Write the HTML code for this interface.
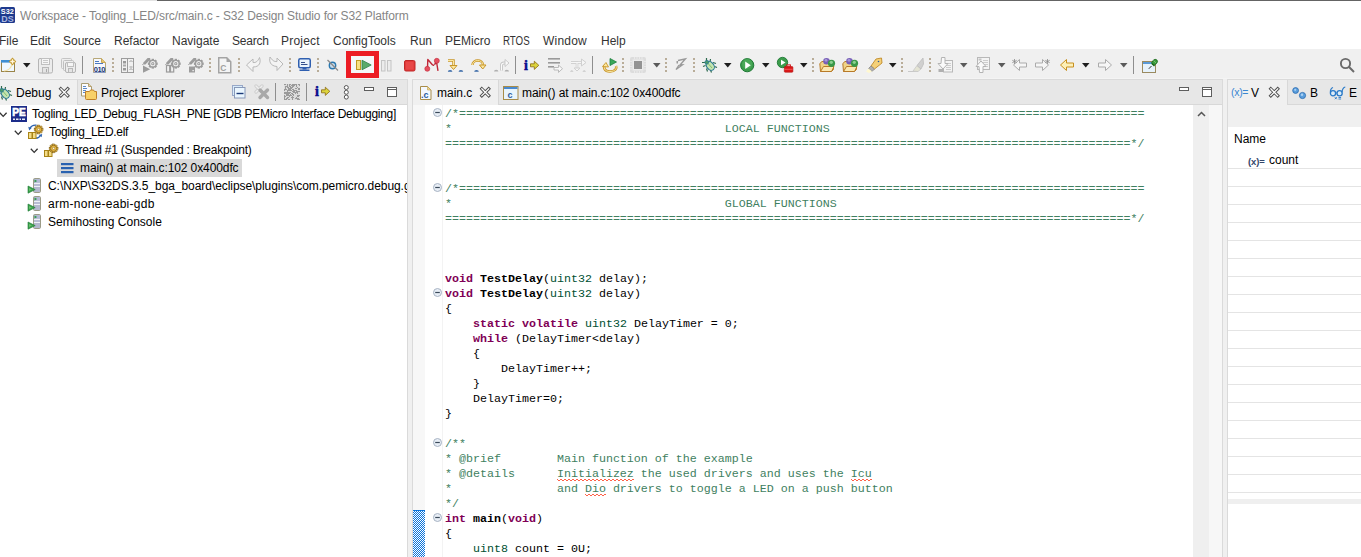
<!DOCTYPE html>
<html><head><meta charset="utf-8">
<style>
*{margin:0;padding:0;box-sizing:border-box}
html,body{width:1361px;height:557px;overflow:hidden;background:#f0f0f0;font-family:"Liberation Sans",sans-serif;font-size:12px;color:#000}
.a{position:absolute}
.t{position:absolute;white-space:pre;line-height:14px}
svg.i{position:absolute;overflow:visible}
#code{position:absolute;left:445px;top:107px;font-family:"Liberation Mono",monospace;font-size:11.67px;line-height:15px;white-space:pre;color:#000}
.c{color:#3f7f5f}
.k{color:#7f0055;font-weight:bold}
.ty{color:#005032}
.fn{font-weight:bold}
.tree{position:absolute;white-space:pre;line-height:18px;height:18px}
</style></head><body>

<div class="a" style="left:0;top:0;width:157px;height:1px;background:#e3e3e3"></div>
<div class="a" style="left:157px;top:0;width:1204px;height:1px;background:#646464"></div>
<div class="a" style="left:0;top:1px;width:1361px;height:48px;background:#fff"></div>
<div class="t" style="left:20px;top:9px;color:#858585;letter-spacing:-0.11px">Workspace - Togling_LED/src/main.c - S32 Design Studio for S32 Platform</div>
<div class="t" style="left:-1px;top:34px;color:#333;letter-spacing:0px">File</div>
<div class="t" style="left:30px;top:34px;color:#333;letter-spacing:0px">Edit</div>
<div class="t" style="left:63px;top:34px;color:#333;letter-spacing:0px">Source</div>
<div class="t" style="left:114px;top:34px;color:#333;letter-spacing:0px">Refactor</div>
<div class="t" style="left:172px;top:34px;color:#333;letter-spacing:0px">Navigate</div>
<div class="t" style="left:232px;top:34px;color:#333;letter-spacing:-0.2px">Search</div>
<div class="t" style="left:281px;top:34px;color:#333;letter-spacing:0.2px">Project</div>
<div class="t" style="left:333px;top:34px;color:#333;letter-spacing:0px">ConfigTools</div>
<div class="t" style="left:410px;top:34px;color:#333;letter-spacing:0px">Run</div>
<div class="t" style="left:445px;top:34px;color:#333;letter-spacing:0px">PEMicro</div>
<div class="t" style="left:503px;top:34px;color:#333;transform:scaleX(0.81);transform-origin:0 0">RTOS</div>
<div class="t" style="left:543px;top:34px;color:#333;letter-spacing:0.2px">Window</div>
<div class="t" style="left:601px;top:34px;color:#333;letter-spacing:0px">Help</div>
<svg class="i" style="left:0px;top:7px" width="15" height="16" viewBox="0 0 15 16"><rect x="0" y="0" width="15" height="16" rx="1.5" fill="#1e3a8e"/><text x="0.8" y="6.8" font-family="Liberation Sans" font-weight="bold" font-size="7.6" fill="#fff" textLength="13" lengthAdjust="spacingAndGlyphs">S32</text><text x="1.3" y="14.6" font-family="Liberation Sans" font-weight="bold" font-size="9" fill="#aab8e0" textLength="12.4" lengthAdjust="spacingAndGlyphs">DS</text></svg>
<div class="a" style="left:0;top:78px;width:1361px;height:1px;background:#f4f4f4"></div>
<svg class="i" style="left:0px;top:57px" width="16" height="16" viewBox="0 0 16 16"><rect x="1.5" y="3.5" width="13" height="11" fill="#f0f8fe" stroke="#9a8448"/><rect x="1" y="3" width="9" height="2.6" fill="#3f8fd2"/><path d="M4 14 Q11 13 12 7" stroke="#f4e2a8" stroke-width="1.2" fill="none"/><polygon points="12.5,0.6 16.2,4.5 12.5,8.4 8.8,4.5" fill="#c49a30"/><path d="M12.5 2.3v4.4M10.3 4.5h4.4" stroke="#fff6dc" stroke-width="1.3"/></svg>
<svg class="i" style="left:23px;top:62.5px" width="8" height="5" viewBox="0 0 8 5"><polygon points="0,0 7.5,0 3.75,4.5" fill="#1e1e1e"/></svg>
<svg class="i" style="left:38px;top:58px" width="15" height="16" viewBox="0 0 15 16"><rect x="0.5" y="0.5" width="14" height="14.5" rx="1.5" fill="#ececec" stroke="#b5b5b5"/><rect x="3.5" y="0.5" width="8" height="6" fill="#f6f6f6" stroke="#c0c0c0"/><path d="M5 2.5h5M5 4.5h5" stroke="#c8c8c8"/><rect x="4.5" y="9.5" width="6" height="5.5" fill="#e4e4e4" stroke="#b8b8b8"/><rect x="8" y="11" width="1" height="3" fill="#aaa"/></svg>
<svg class="i" style="left:61px;top:58px" width="16" height="16" viewBox="0 0 16 16"><rect x="0.5" y="0.5" width="10" height="10" rx="1" fill="#eee" stroke="#c4c4c4"/><rect x="2.5" y="2.5" width="10" height="10" rx="1" fill="#eee" stroke="#c0c0c0"/><rect x="4.5" y="4.5" width="10" height="10" rx="1.5" fill="#ececec" stroke="#b5b5b5"/><rect x="6.5" y="4.5" width="6" height="4" fill="#f6f6f6" stroke="#c0c0c0"/><rect x="7.5" y="10.5" width="4" height="4" fill="#e4e4e4" stroke="#b8b8b8"/></svg>
<div class="a" style="left:82px;top:56px;width:1px;height:18px;background:#8e8e8e"></div>
<svg class="i" style="left:93px;top:58px" width="14" height="16" viewBox="0 0 14 16"><path d="M0.5 0.5h8l4 4v10h-12z" fill="#f6f8fd" stroke="#b8a878"/><path d="M8.5 0.5v4h4" fill="#e8c870" stroke="#c8a858"/><path d="M2 3.5h4M2 5.5h8" stroke="#4a78c0" stroke-width="1"/><text x="0.8" y="13.6" font-family="Liberation Sans" font-weight="bold" font-size="7.5" fill="#1a3a78" letter-spacing="-0.4">010</text><path d="M0.5 14.5h12" stroke="#8a9ac0"/></svg>
<svg class="i" style="left:112px;top:58px" width="2" height="14" viewBox="0 0 2 14"><rect x="0" y="0" width="2" height="2" fill="#b9ad99"/><rect x="0" y="4" width="2" height="2" fill="#b9ad99"/><rect x="0" y="8" width="2" height="2" fill="#b9ad99"/><rect x="0" y="12" width="2" height="2" fill="#b9ad99"/></svg>
<svg class="i" style="left:121px;top:58px" width="14" height="16" viewBox="0 0 14 16"><rect x="0.5" y="0.5" width="12" height="14" fill="none" stroke="#9c9c9c"/><path d="M6.5 0.5v14" stroke="#9c9c9c"/><rect x="2" y="3" width="3" height="2.5" fill="#999"/><rect x="2" y="6.5" width="3" height="2" fill="#aaa"/><rect x="2" y="10" width="3" height="2.5" fill="#999"/><path d="M8.5 4l1.5-1.5 1.5 1.5M8.5 9h3M8.5 12l1.5-1.5 1.5 1.5" stroke="#9c9c9c" fill="none"/></svg>
<svg class="i" style="left:142px;top:57px" width="16" height="16" viewBox="0 0 16 16"><polygon points="1.2,5.8 5.6,1 8.2,1 8.2,2.4 3.4,7.6 1.2,7.6" fill="#9c9c9c"/><rect x="0" y="7" width="1" height="1" fill="#b8b8b8"/><polygon points="1,8.6 8.2,12.2 1,15.8" fill="#9c9c9c"/><rect x="9.600000000000001" y="1.7999999999999998" width="2.4" height="2.2" fill="#9c9c9c" transform="rotate(0 10.8 6.7)"/><rect x="9.600000000000001" y="1.7999999999999998" width="2.4" height="2.2" fill="#9c9c9c" transform="rotate(45 10.8 6.7)"/><rect x="9.600000000000001" y="1.7999999999999998" width="2.4" height="2.2" fill="#9c9c9c" transform="rotate(90 10.8 6.7)"/><rect x="9.600000000000001" y="1.7999999999999998" width="2.4" height="2.2" fill="#9c9c9c" transform="rotate(135 10.8 6.7)"/><rect x="9.600000000000001" y="1.7999999999999998" width="2.4" height="2.2" fill="#9c9c9c" transform="rotate(180 10.8 6.7)"/><rect x="9.600000000000001" y="1.7999999999999998" width="2.4" height="2.2" fill="#9c9c9c" transform="rotate(225 10.8 6.7)"/><rect x="9.600000000000001" y="1.7999999999999998" width="2.4" height="2.2" fill="#9c9c9c" transform="rotate(270 10.8 6.7)"/><rect x="9.600000000000001" y="1.7999999999999998" width="2.4" height="2.2" fill="#9c9c9c" transform="rotate(315 10.8 6.7)"/><circle cx="10.8" cy="6.7" r="3.3" fill="#f0f0f0" stroke="#9c9c9c" stroke-width="1.4"/><circle cx="10.8" cy="6.7" r="1.6" fill="#9c9c9c"/><circle cx="10.8" cy="6.7" r="0.6" fill="#f0f0f0"/></svg>
<svg class="i" style="left:165px;top:57px" width="16" height="16" viewBox="0 0 16 16"><polygon points="1.2,5.8 5.6,1 8.2,1 8.2,2.4 3.4,7.6 1.2,7.6" fill="#9c9c9c"/><rect x="0" y="7" width="1" height="1" fill="#b8b8b8"/><rect x="1.5" y="8.5" width="3.2" height="6.5" fill="none" stroke="#9c9c9c" stroke-width="1.2"/><rect x="5.5" y="8.5" width="3.2" height="6.5" fill="none" stroke="#9c9c9c" stroke-width="1.2"/><rect x="9.600000000000001" y="1.7999999999999998" width="2.4" height="2.2" fill="#9c9c9c" transform="rotate(0 10.8 6.7)"/><rect x="9.600000000000001" y="1.7999999999999998" width="2.4" height="2.2" fill="#9c9c9c" transform="rotate(45 10.8 6.7)"/><rect x="9.600000000000001" y="1.7999999999999998" width="2.4" height="2.2" fill="#9c9c9c" transform="rotate(90 10.8 6.7)"/><rect x="9.600000000000001" y="1.7999999999999998" width="2.4" height="2.2" fill="#9c9c9c" transform="rotate(135 10.8 6.7)"/><rect x="9.600000000000001" y="1.7999999999999998" width="2.4" height="2.2" fill="#9c9c9c" transform="rotate(180 10.8 6.7)"/><rect x="9.600000000000001" y="1.7999999999999998" width="2.4" height="2.2" fill="#9c9c9c" transform="rotate(225 10.8 6.7)"/><rect x="9.600000000000001" y="1.7999999999999998" width="2.4" height="2.2" fill="#9c9c9c" transform="rotate(270 10.8 6.7)"/><rect x="9.600000000000001" y="1.7999999999999998" width="2.4" height="2.2" fill="#9c9c9c" transform="rotate(315 10.8 6.7)"/><circle cx="10.8" cy="6.7" r="3.3" fill="#f0f0f0" stroke="#9c9c9c" stroke-width="1.4"/><circle cx="10.8" cy="6.7" r="1.6" fill="#9c9c9c"/><circle cx="10.8" cy="6.7" r="0.6" fill="#f0f0f0"/></svg>
<svg class="i" style="left:188px;top:57px" width="16" height="16" viewBox="0 0 16 16"><polygon points="1.2,5.8 5.6,1 8.2,1 8.2,2.4 3.4,7.6 1.2,7.6" fill="#9c9c9c"/><rect x="0" y="7" width="1" height="1" fill="#b8b8b8"/><rect x="1" y="9.5" width="6" height="6" fill="#9c9c9c"/><rect x="4.5" y="13" width="1.2" height="1.2" fill="#fff"/><rect x="9.600000000000001" y="1.7999999999999998" width="2.4" height="2.2" fill="#9c9c9c" transform="rotate(0 10.8 6.7)"/><rect x="9.600000000000001" y="1.7999999999999998" width="2.4" height="2.2" fill="#9c9c9c" transform="rotate(45 10.8 6.7)"/><rect x="9.600000000000001" y="1.7999999999999998" width="2.4" height="2.2" fill="#9c9c9c" transform="rotate(90 10.8 6.7)"/><rect x="9.600000000000001" y="1.7999999999999998" width="2.4" height="2.2" fill="#9c9c9c" transform="rotate(135 10.8 6.7)"/><rect x="9.600000000000001" y="1.7999999999999998" width="2.4" height="2.2" fill="#9c9c9c" transform="rotate(180 10.8 6.7)"/><rect x="9.600000000000001" y="1.7999999999999998" width="2.4" height="2.2" fill="#9c9c9c" transform="rotate(225 10.8 6.7)"/><rect x="9.600000000000001" y="1.7999999999999998" width="2.4" height="2.2" fill="#9c9c9c" transform="rotate(270 10.8 6.7)"/><rect x="9.600000000000001" y="1.7999999999999998" width="2.4" height="2.2" fill="#9c9c9c" transform="rotate(315 10.8 6.7)"/><circle cx="10.8" cy="6.7" r="3.3" fill="#f0f0f0" stroke="#9c9c9c" stroke-width="1.4"/><circle cx="10.8" cy="6.7" r="1.6" fill="#9c9c9c"/><circle cx="10.8" cy="6.7" r="0.6" fill="#f0f0f0"/></svg>
<svg class="i" style="left:209px;top:58px" width="2" height="14" viewBox="0 0 2 14"><rect x="0" y="0" width="2" height="2" fill="#b9ad99"/><rect x="0" y="4" width="2" height="2" fill="#b9ad99"/><rect x="0" y="8" width="2" height="2" fill="#b9ad99"/><rect x="0" y="12" width="2" height="2" fill="#b9ad99"/></svg>
<svg class="i" style="left:218px;top:57px" width="14" height="16" viewBox="0 0 14 16"><path d="M0.75 0.75h8l4 4v11h-12z" fill="#f4f4f4" stroke="#a4a4a4" stroke-width="1.5"/><path d="M8.5 0.5v4.5h4.5z" fill="#a4a4a4"/><text x="2.3" y="13.5" font-family="Liberation Sans" font-weight="bold" font-size="8.5" fill="#a0a0a0">C</text></svg>
<svg class="i" style="left:238px;top:58px" width="2" height="14" viewBox="0 0 2 14"><rect x="0" y="0" width="2" height="2" fill="#b9ad99"/><rect x="0" y="4" width="2" height="2" fill="#b9ad99"/><rect x="0" y="8" width="2" height="2" fill="#b9ad99"/><rect x="0" y="12" width="2" height="2" fill="#b9ad99"/></svg>
<svg class="i" style="left:246px;top:57px" width="16" height="16" viewBox="0 0 16 16"><path d="M0.5 8 L7 2 L7 5.5 C10 6 12 4 13.5 0.5 C15 5 14 10 7 10 L7 14.5 Z" fill="#f4f4f4" stroke="#b8b8b8"/></svg>
<svg class="i" style="left:268px;top:57px" width="16" height="16" viewBox="0 0 16 16"><path d="M15 7 L9 1 L9 4.5 C6 5 4 3 2 0 C1 4 2 9 9 9.5 L9 13.5 Z" fill="#f4f4f4" stroke="#b8b8b8"/></svg>
<svg class="i" style="left:289px;top:58px" width="2" height="14" viewBox="0 0 2 14"><rect x="0" y="0" width="2" height="2" fill="#b9ad99"/><rect x="0" y="4" width="2" height="2" fill="#b9ad99"/><rect x="0" y="8" width="2" height="2" fill="#b9ad99"/><rect x="0" y="12" width="2" height="2" fill="#b9ad99"/></svg>
<svg class="i" style="left:298px;top:58px" width="14" height="14" viewBox="0 0 14 14"><rect x="0.75" y="0.75" width="11.5" height="9" rx="1.5" fill="#eaf4fc" stroke="#2f5fb0" stroke-width="1.5"/><path d="M3 4.5h4M3 6.5h6.5" stroke="#34508c" stroke-width="1"/><rect x="4.5" y="10" width="4" height="1.5" fill="#2f5fb0"/><rect x="1.5" y="11.5" width="10" height="1.5" fill="#2f5fb0"/></svg>
<svg class="i" style="left:317px;top:58px" width="2" height="14" viewBox="0 0 2 14"><rect x="0" y="0" width="2" height="2" fill="#b9ad99"/><rect x="0" y="4" width="2" height="2" fill="#b9ad99"/><rect x="0" y="8" width="2" height="2" fill="#b9ad99"/><rect x="0" y="12" width="2" height="2" fill="#b9ad99"/></svg>
<svg class="i" style="left:327px;top:59px" width="12" height="12" viewBox="0 0 12 12"><circle cx="5.5" cy="6.5" r="3.2" fill="#c8dcec" stroke="#2a78b0" stroke-width="1.4"/><path d="M0.5 1 L11 11.5" stroke="#8a8a8a" stroke-width="1.3"/></svg>
<div class="a" style="left:346px;top:51px;width:33px;height:27px;border:5px solid #ec1c24;background:#f4f6f8"></div>
<svg class="i" style="left:356px;top:60px" width="16" height="11" viewBox="0 0 16 11"><rect x="0.5" y="0.5" width="4" height="9" fill="#f8e080" stroke="#c09a20"/><polygon points="6,0.2 15.2,5 6,9.8" fill="#5aaa6a" stroke="#2e8048" stroke-width="0.8"/></svg>
<svg class="i" style="left:381px;top:60px" width="12" height="12" viewBox="0 0 12 12"><rect x="0.5" y="0.5" width="3.5" height="10.5" fill="#ececec" stroke="#c4c4c4"/><rect x="6.5" y="0.5" width="3.5" height="10.5" fill="#ececec" stroke="#c4c4c4"/></svg>
<svg class="i" style="left:404px;top:60px" width="12" height="12" viewBox="0 0 12 12"><rect x="0.5" y="0.5" width="10.5" height="10.5" rx="1.5" fill="#e23a3a" stroke="#c02828"/><rect x="2" y="2" width="7.5" height="7.5" fill="#e84848"/></svg>
<svg class="i" style="left:424px;top:58px" width="16" height="14" viewBox="0 0 16 14"><path d="M3.5 10 L3.8 1.5 L8.6 7 M8.6 7.2 h1.6 M10.6 6.8 L12 3.5 M12.4 3 L14 12.8" stroke="#c02838" stroke-width="1.4" fill="none" stroke-linejoin="round"/><circle cx="3.3" cy="10.8" r="2.5" fill="#e65060" stroke="#c02838" stroke-width="0.6"/><circle cx="12.8" cy="2.8" r="2.5" fill="#e65060" stroke="#c02838" stroke-width="0.6"/></svg>
<svg class="i" style="left:447px;top:59px" width="17" height="13" viewBox="0 0 17 13"><path d="M1 1.5h5.5v6" stroke="#c8962a" stroke-width="2.5" fill="none"/><path d="M1 1.5h5.5v6" stroke="#fbe7a0" stroke-width="1" fill="none"/><polygon points="3,6.5 10,6.5 6.5,10.5" fill="#fbe7a0" stroke="#c8962a"/><path d="M0.8 12.8 A2.3 1.9 0 0 1 5.4 12.8 Z M11.6 12.8 A2.3 1.9 0 0 1 16.2 12.8 Z" fill="#3a6aa8"/></svg>
<svg class="i" style="left:470px;top:59px" width="17" height="13" viewBox="0 0 17 13"><path d="M2.5 6 C2.5 0 13 0 13 6" stroke="#c8962a" stroke-width="2.5" fill="none"/><path d="M2.5 6 C2.5 0 13 0 13 6" stroke="#fbe7a0" stroke-width="1" fill="none"/><polygon points="9.5,6 16,6 12.75,10" fill="#fbe7a0" stroke="#c8962a"/><path d="M4.2 12.8 A2.3 1.9 0 0 1 8.8 12.8 Z" fill="#3a6aa8"/></svg>
<svg class="i" style="left:494px;top:58px" width="16" height="14" viewBox="0 0 16 14"><path d="M7.5 12.5 V7.5 Q7.5 5 10 5 H11.5" stroke="#c4c4c4" stroke-width="3" fill="none"/><path d="M7.5 12.5 V7.5 Q7.5 5 10 5 H11.5" stroke="#fafafa" stroke-width="1.2" fill="none"/><polygon points="11,1.5 15,5 11,8.5" fill="#fafafa" stroke="#c4c4c4" stroke-width="0.9"/><path d="M0 13.5 A2.2 1.8 0 0 1 4.4 13.5 Z M10.6 13.5 A2.2 1.8 0 0 1 15 13.5 Z" fill="#b0b0b0"/></svg>
<div class="a" style="left:515px;top:56px;width:1px;height:18px;background:#8e8e8e"></div>
<svg class="i" style="left:524px;top:58.5px" width="16" height="12" viewBox="0 0 16 12"><text x="0" y="11" font-family="Liberation Serif" font-weight="bold" font-size="14" fill="#0a0a8c" stroke="#0a0a8c" stroke-width="0.5">i</text><polygon points="6.5,4.8 10.3,4.8 10.3,2.2 14.8,6.3 10.3,10.4 10.3,7.8 6.5,7.8" fill="#dcd43c" stroke="#8a6810" stroke-width="0.8"/></svg>
<svg class="i" style="left:548px;top:58px" width="16" height="15" viewBox="0 0 16 15"><rect x="0" y="0" width="12" height="1.6" fill="#9a9a9a"/><rect x="0" y="4" width="12" height="1.6" fill="#9a9a9a"/><rect x="0" y="8" width="6" height="1.6" fill="#9a9a9a"/><path d="M6 9.5h4.5v-2.5l4 3.7-4 3.7v-2.4h-4.5z" fill="#f8f8f8" stroke="#b4b4b4" stroke-width="0.9"/></svg>
<svg class="i" style="left:570px;top:58px" width="17" height="15" viewBox="0 0 17 15"><path d="M1 4.5h6v6" stroke="#d0d0d0" stroke-width="2.6" fill="none"/><path d="M1 4.5h11" stroke="#d0d0d0" stroke-width="2.6"/><path d="M1 4.5h11M7 4.5v6" stroke="#f6f6f6" stroke-width="1"/><polygon points="11.5,1 16,4.5 11.5,8" fill="#f6f6f6" stroke="#d0d0d0"/><polygon points="4,10 10,10 7,13" fill="#f6f6f6" stroke="#d0d0d0"/><path d="M0 13.5 q1.8-2 3.6 0z M12.4 13.5 q1.8-2 3.6 0z" fill="#b4b4b4"/></svg>
<div class="a" style="left:592px;top:56px;width:1px;height:18px;background:#8e8e8e"></div>
<svg class="i" style="left:602px;top:58px" width="16" height="15" viewBox="0 0 16 15"><polygon points="8,0.5 14.5,4 8,7.5" fill="#3aa85a" stroke="#1e8040" stroke-width="0.8"/><path d="M3.5 7 C1 9 2 13.5 8 13.5 C13.5 13.5 15 10 14 8" stroke="#c8962a" stroke-width="2.6" fill="none"/><path d="M3.5 7 C1 9 2 13.5 8 13.5 C13.5 13.5 15 10 14 8" stroke="#fce8a0" stroke-width="1" fill="none"/><polygon points="0.5,8.5 4,4.5 6.5,9" fill="#fce8a0" stroke="#c8962a" stroke-width="0.9"/></svg>
<svg class="i" style="left:622px;top:58px" width="2" height="14" viewBox="0 0 2 14"><rect x="0" y="0" width="2" height="2" fill="#b9ad99"/><rect x="0" y="4" width="2" height="2" fill="#b9ad99"/><rect x="0" y="8" width="2" height="2" fill="#b9ad99"/><rect x="0" y="12" width="2" height="2" fill="#b9ad99"/></svg>
<svg class="i" style="left:630px;top:57px" width="16" height="16" viewBox="0 0 16 16"><rect x="0" y="0" width="16" height="16" rx="2" fill="#dcdcdc"/><rect x="2.5" y="2.5" width="11" height="11" fill="#ececec"/><rect x="4" y="4" width="8" height="8" fill="#939393"/><path d="M4.5 0v2M7 0v2M9.5 0v2M12 0v2M4.5 14v2M7 14v2M9.5 14v2M12 14v2M0 4.5h2M0 7h2M0 9.5h2M0 12h2M14 4.5h2M14 7h2M14 9.5h2M14 12h2" stroke="#eaeaea"/></svg>
<svg class="i" style="left:653px;top:63px" width="8" height="5" viewBox="0 0 8 5"><polygon points="0,0 7.5,0 3.75,4.5" fill="#5a5a5a"/></svg>
<svg class="i" style="left:665px;top:58px" width="2" height="14" viewBox="0 0 2 14"><rect x="0" y="0" width="2" height="2" fill="#b9ad99"/><rect x="0" y="4" width="2" height="2" fill="#b9ad99"/><rect x="0" y="8" width="2" height="2" fill="#b9ad99"/><rect x="0" y="12" width="2" height="2" fill="#b9ad99"/></svg>
<svg class="i" style="left:675px;top:58px" width="11" height="12" viewBox="0 0 11 12"><path d="M3 2.5 L10.5 0.8 L5 7 L7.5 6.8 L1 11.5 L4 7" stroke="#9a9a9a" stroke-width="1.3" fill="none"/><rect x="1.5" y="3" width="1.5" height="2.5" fill="#9a9a9a"/></svg>
<svg class="i" style="left:693px;top:58px" width="2" height="14" viewBox="0 0 2 14"><rect x="0" y="0" width="2" height="2" fill="#b9ad99"/><rect x="0" y="4" width="2" height="2" fill="#b9ad99"/><rect x="0" y="8" width="2" height="2" fill="#b9ad99"/><rect x="0" y="12" width="2" height="2" fill="#b9ad99"/></svg>
<svg class="i" style="left:700px;top:56px" width="18" height="18" viewBox="0 0 18 18"><g stroke="#2e6a4e" stroke-width="1.2" fill="none"><path d="M6.5 2v3M10.5 3l-0.5 3M2 6.5h3M3 10.5l2.5-1M6.5 12.5l1 3M10.5 14l1 2.5M13 6.5l3 1M14.5 10.5l2.5 1"/></g><ellipse cx="10.2" cy="9.8" rx="3.5" ry="5" transform="rotate(-40 10.2 9.8)" fill="#c4e4b0" stroke="#2a7894" stroke-width="1.1"/><circle cx="6.8" cy="6.3" r="1.9" fill="#4a9a6a" stroke="#2a7894" stroke-width="0.8"/><path d="M8.5 8 L12 12" stroke="#7ab86a" stroke-width="0.9"/></svg>
<svg class="i" style="left:724px;top:62.7px" width="8" height="5" viewBox="0 0 8 5"><polygon points="0,0 7.5,0 3.75,4.5" fill="#1e1e1e"/></svg>
<svg class="i" style="left:740px;top:58px" width="15" height="15" viewBox="0 0 15 15"><circle cx="7.2" cy="7.2" r="6.6" fill="#3c9c4c" stroke="#1f7a36" stroke-width="1"/><circle cx="7.2" cy="6" r="5" fill="#52b060" opacity=".6"/><polygon points="5.2,3.5 10.8,7.2 5.2,11" fill="#fff"/></svg>
<svg class="i" style="left:762px;top:62.7px" width="8" height="5" viewBox="0 0 8 5"><polygon points="0,0 7.5,0 3.75,4.5" fill="#1e1e1e"/></svg>
<svg class="i" style="left:777px;top:57px" width="17" height="16" viewBox="0 0 17 16"><circle cx="5.5" cy="5.5" r="5.2" fill="#3c9c4c" stroke="#1f7a36" stroke-width="0.9"/><polygon points="4,2.8 8.5,5.5 4,8.2" fill="#fff"/><rect x="7.3" y="9.6" width="8.6" height="5.6" rx="0.8" fill="#dc1818" stroke="#b01010" stroke-width="0.6"/><rect x="9.8" y="7.9" width="3.6" height="2" fill="none" stroke="#d01818" stroke-width="1"/><path d="M7.5 12.3h8" stroke="#ff8080" stroke-width="0.6"/></svg>
<svg class="i" style="left:800px;top:62.7px" width="8" height="5" viewBox="0 0 8 5"><polygon points="0,0 7.5,0 3.75,4.5" fill="#1e1e1e"/></svg>
<svg class="i" style="left:812px;top:58px" width="2" height="14" viewBox="0 0 2 14"><rect x="0" y="0" width="2" height="2" fill="#b9ad99"/><rect x="0" y="4" width="2" height="2" fill="#b9ad99"/><rect x="0" y="8" width="2" height="2" fill="#b9ad99"/><rect x="0" y="12" width="2" height="2" fill="#b9ad99"/></svg>
<svg class="i" style="left:819px;top:57px" width="17" height="16" viewBox="0 0 17 16"><path d="M0.8 6.5 L3 4.5 H8 L8 6 H14.5 V12.5 L12.5 14.5 H1.5 Z" fill="#f0d488" stroke="#b87a28" stroke-width="1"/><path d="M1.5 14.5 L4.5 9.5 H15 L12.5 14.5 Z" fill="#fbe8b0" stroke="#b87a28" stroke-width="1"/><circle cx="7.5" cy="4.3" r="3.3" fill="#7860b8"/><circle cx="7" cy="3.3" r="1.4" fill="#a898d8"/><circle cx="12.5" cy="6.3" r="3.6" fill="#3a9848"/><circle cx="12.3" cy="5.3" r="1.6" fill="#8cd090"/></svg>
<svg class="i" style="left:842px;top:57px" width="17" height="16" viewBox="0 0 17 16"><path d="M0.8 6.5 L3 4.5 H8 L8 6 H14.5 V12.5 L12.5 14.5 H1.5 Z" fill="#f0d488" stroke="#b87a28" stroke-width="1"/><path d="M1.5 14.5 L4.5 9.5 H15 L12.5 14.5 Z" fill="#fbe8b0" stroke="#b87a28" stroke-width="1"/><circle cx="7.5" cy="4.3" r="3.3" fill="#7860b8"/><circle cx="7" cy="3.3" r="1.4" fill="#a898d8"/><circle cx="12.5" cy="6.3" r="3.6" fill="#3a9848"/><circle cx="12.3" cy="5.3" r="1.6" fill="#8cd090"/></svg>
<svg class="i" style="left:866px;top:57px" width="17" height="16" viewBox="0 0 17 16"><polygon points="10,2 15.5,1 16,6 8.5,12 5,9" fill="#f4d078" stroke="#c08a28" stroke-width="0.9"/><polygon points="5,9 8.5,12 6,14.5 2.5,11.5" fill="#b0b0b0" stroke="#888" stroke-width="0.8"/><polygon points="2.5,11.5 6,14.5 3,16 0,14.5" fill="#fff8d0"/><circle cx="12.5" cy="4.5" r="0.8" fill="#2a5a9a"/></svg>
<svg class="i" style="left:889px;top:62.7px" width="8" height="5" viewBox="0 0 8 5"><polygon points="0,0 7.5,0 3.75,4.5" fill="#1e1e1e"/></svg>
<svg class="i" style="left:901px;top:58px" width="2" height="14" viewBox="0 0 2 14"><rect x="0" y="0" width="2" height="2" fill="#b9ad99"/><rect x="0" y="4" width="2" height="2" fill="#b9ad99"/><rect x="0" y="8" width="2" height="2" fill="#b9ad99"/><rect x="0" y="12" width="2" height="2" fill="#b9ad99"/></svg>
<svg class="i" style="left:908px;top:57px" width="16" height="15" viewBox="0 0 16 15"><path d="M0 14.5 H10" stroke="#c8c8c8"/><polygon points="5,14 9,8.5 13,12 10,14.5" fill="#e4e4d4" stroke="#c8c8c8" stroke-width="0.8"/><polygon points="9,8.5 15,1 15.5,7 13,12" fill="#d0d0d0" stroke="#bdbdbd" stroke-width="0.8"/></svg>
<svg class="i" style="left:929px;top:58px" width="2" height="14" viewBox="0 0 2 14"><rect x="0" y="0" width="2" height="2" fill="#b9ad99"/><rect x="0" y="4" width="2" height="2" fill="#b9ad99"/><rect x="0" y="8" width="2" height="2" fill="#b9ad99"/><rect x="0" y="12" width="2" height="2" fill="#b9ad99"/></svg>
<svg class="i" style="left:938px;top:57px" width="16" height="16" viewBox="0 0 16 16"><rect x="5.5" y="3.5" width="9" height="11.5" fill="#f4f4f4" stroke="#b8b8b8"/><path d="M8 6.5h5M8 8.5h5M8 10.5h5M8 12.5h5" stroke="#c8c8c8" stroke-width="0.9"/><path d="M3.5 0.5h3.5v6h3l-5 5.5-5-5.5h3z" fill="#fafafa" stroke="#b4b4b4"/><rect x="0.5" y="12" width="5" height="3" fill="#b0b0b0"/></svg>
<svg class="i" style="left:960px;top:63px" width="8" height="5" viewBox="0 0 8 5"><polygon points="0,0 7.5,0 3.75,4.5" fill="#5a5a5a"/></svg>
<svg class="i" style="left:976px;top:57px" width="16" height="16" viewBox="0 0 16 16"><rect x="1.5" y="0.5" width="12" height="12" fill="#f4f4f4" stroke="#b8b8b8"/><rect x="2.5" y="1.5" width="3" height="2" fill="#c4c4c4"/><path d="M7 3.5h5M7 5.5h5M7 7.5h5M7 9.5h5" stroke="#c8c8c8" stroke-width="0.9"/><path d="M3.5 15.5h3.5v-6h3l-5-5.5-5 5.5h3z" fill="#fafafa" stroke="#b4b4b4"/></svg>
<svg class="i" style="left:998px;top:63px" width="8" height="5" viewBox="0 0 8 5"><polygon points="0,0 7.5,0 3.75,4.5" fill="#5a5a5a"/></svg>
<svg class="i" style="left:1012px;top:58.5px" width="16" height="13" viewBox="0 0 16 13"><g transform="translate(15 0) scale(-1 1)"><path d="M0.5 4 H7.5 V0.5 L13.5 6 L7.5 11.5 V8 H0.5 Z" fill="#f6f6f6" stroke="#ababab" stroke-width="1" stroke-linejoin="round"/><path d="M12.5 0v5M10.3 1.3l4.4 2.4M14.7 1.3l-4.4 2.4" stroke="#8a8a8a" stroke-width="0.8"/></g></svg>
<svg class="i" style="left:1035px;top:58.5px" width="16" height="13" viewBox="0 0 16 13"><path d="M0.5 4 H7.5 V0.5 L13.5 6 L7.5 11.5 V8 H0.5 Z" fill="#f6f6f6" stroke="#ababab" stroke-width="1" stroke-linejoin="round"/><path d="M12.5 0v5M10.3 1.3l4.4 2.4M14.7 1.3l-4.4 2.4" stroke="#8a8a8a" stroke-width="0.8"/></svg>
<svg class="i" style="left:1059px;top:59px" width="16" height="13" viewBox="0 0 16 13"><g transform="translate(15 0) scale(-1 1)"><path d="M0.5 4 H7.5 V0.5 L13.5 6 L7.5 11.5 V8 H0.5 Z" fill="#fdf0b8" stroke="#c8901e" stroke-width="1" stroke-linejoin="round"/></g></svg>
<svg class="i" style="left:1082px;top:62.7px" width="8" height="5" viewBox="0 0 8 5"><polygon points="0,0 7.5,0 3.75,4.5" fill="#1e1e1e"/></svg>
<svg class="i" style="left:1098px;top:59px" width="16" height="13" viewBox="0 0 16 13"><path d="M0.5 4 H7.5 V0.5 L13.5 6 L7.5 11.5 V8 H0.5 Z" fill="#f6f6f6" stroke="#ababab" stroke-width="1" stroke-linejoin="round"/></svg>
<svg class="i" style="left:1120px;top:63px" width="8" height="5" viewBox="0 0 8 5"><polygon points="0,0 7.5,0 3.75,4.5" fill="#5a5a5a"/></svg>
<div class="a" style="left:1133px;top:56px;width:1px;height:18px;background:#8e8e8e"></div>
<svg class="i" style="left:1142px;top:57px" width="17" height="17" viewBox="0 0 17 17"><rect x="0.5" y="4.5" width="13" height="11" fill="#e6f2fb" stroke="#9a8a60"/><rect x="1" y="5" width="12" height="2" fill="#5a9ad8"/><path d="M9.5 9 L6.8 11.8" stroke="#333" stroke-width="1"/><ellipse cx="12.6" cy="5.2" rx="3.2" ry="2.3" transform="rotate(-45 12.6 5.2)" fill="#3c9c3c" stroke="#1e6a1e" stroke-width="0.8"/><path d="M10 6.5 L12.5 9" stroke="#1e6a1e" stroke-width="1.4"/><path d="M11.5 3.5 L14 6" stroke="#8ad08a" stroke-width="0.7"/></svg>
<svg class="i" style="left:1339px;top:57px" width="17" height="17" viewBox="0 0 17 17"><circle cx="6.5" cy="6.5" r="4.6" fill="none" stroke="#6a6a6a" stroke-width="1.9"/><path d="M9.8 9.8 L15 15" stroke="#6a6a6a" stroke-width="2"/></svg>
<div class="a" style="left:0;top:79px;width:408px;height:478px;background:#fff;border-top:1px solid #dadada;border-right:1px solid #dadada"></div>
<div class="a" style="left:0;top:80px;width:407px;height:25px;background:#e7e7e7"></div>
<div class="a" style="left:0;top:80px;width:77px;height:25px;background:#f0f0f0"></div>
<div class="a" style="left:77px;top:80px;width:1px;height:25px;background:#d8d8d8"></div>
<div class="a" style="left:77px;top:104px;width:330px;height:1px;background:#d8d8d8"></div>
<svg class="i" style="left:-5px;top:84px" width="18" height="18" viewBox="0 0 18 18"><g stroke="#2e6a4e" stroke-width="1.2" fill="none"><path d="M6.5 2v3M10.5 3l-0.5 3M2 6.5h3M3 10.5l2.5-1M6.5 12.5l1 3M10.5 14l1 2.5M13 6.5l3 1M14.5 10.5l2.5 1"/></g><ellipse cx="10.2" cy="9.8" rx="3.5" ry="5" transform="rotate(-40 10.2 9.8)" fill="#c4e4b0" stroke="#2a7894" stroke-width="1.1"/><circle cx="6.8" cy="6.3" r="1.9" fill="#4a9a6a" stroke="#2a7894" stroke-width="0.8"/><path d="M8.5 8 L12 12" stroke="#7ab86a" stroke-width="0.9"/></svg>
<div class="t" style="left:16px;top:86px">Debug</div>
<svg class="i" style="left:59px;top:87px" width="11" height="11" viewBox="0 0 11 11"><path d="M1.8 1.8 L8.7 8.7 M8.7 1.8 L1.8 8.7" stroke="#505050" stroke-width="3.2" stroke-linecap="square"/><path d="M1.8 1.8 L8.7 8.7 M8.7 1.8 L1.8 8.7" stroke="#fff" stroke-width="1.3" stroke-linecap="square"/></svg>
<svg class="i" style="left:81px;top:83px" width="16" height="17" viewBox="0 0 16 17"><path d="M0.5 0.5h7l3 3v9.5h-10z" fill="#fbfcfe" stroke="#a89c74"/><path d="M7.5 0.5v3h3" fill="#e8d8a8" stroke="#b8a070"/><path d="M2 3.5h3M2 5.5h4M2 7.5h3M2 9.5h3" stroke="#5a88c8"/><path d="M4.5 8.5 h4 l1-1.5 h3 l1 1.5 h2 v7 q0 1-1 1 h-9 q-1 0-1-1z" fill="#f8d068" stroke="#c08028"/></svg>
<div class="t" style="left:101px;top:86px;letter-spacing:-0.1px">Project Explorer</div>
<svg class="i" style="left:232px;top:85px" width="14" height="15" viewBox="0 0 14 15"><rect x="0.5" y="0.5" width="10" height="10" fill="#d8ecfa" stroke="#98a8c8"/><rect x="2.5" y="2.5" width="10.5" height="10.5" fill="#eaf6fe" stroke="#8898b8"/><path d="M4.5 8.5h7" stroke="#1a3a78" stroke-width="1.4"/></svg>
<svg class="i" style="left:254px;top:84px" width="16" height="16" viewBox="0 0 16 16"><path d="M2 2 L8 8 M8 2 L2 8" stroke="#cfcfcf" stroke-width="3.2" stroke-linecap="round"/><path d="M2 2 L8 8 M8 2 L2 8" stroke="#efefef" stroke-width="1.4" stroke-linecap="round"/><path d="M6 6 L13.5 13.5 M13.5 6 L6 13.5" stroke="#a8a8a8" stroke-width="3.4" stroke-linecap="round"/></svg>
<div class="a" style="left:275px;top:83px;width:1px;height:18px;background:#8e8e8e"></div>
<svg class="i" style="left:284px;top:84px" width="16" height="16" viewBox="0 0 16 16"><rect x="0" y="0" width="16" height="16" fill="#dcdcdc"/><rect x="0" y="0" width="1" height="1" fill="#9a9a9a"/><rect x="1" y="0" width="1" height="1" fill="#9a9a9a"/><rect x="3" y="0" width="1" height="1" fill="#9a9a9a"/><rect x="5" y="0" width="1" height="1" fill="#9a9a9a"/><rect x="6" y="0" width="1" height="1" fill="#9a9a9a"/><rect x="8" y="0" width="1" height="1" fill="#9a9a9a"/><rect x="9" y="0" width="1" height="1" fill="#9a9a9a"/><rect x="10" y="0" width="1" height="1" fill="#9a9a9a"/><rect x="11" y="0" width="1" height="1" fill="#9a9a9a"/><rect x="12" y="0" width="1" height="1" fill="#9a9a9a"/><rect x="14" y="0" width="1" height="1" fill="#9a9a9a"/><rect x="15" y="0" width="1" height="1" fill="#9a9a9a"/><rect x="3" y="1" width="1" height="1" fill="#9a9a9a"/><rect x="5" y="1" width="1" height="1" fill="#9a9a9a"/><rect x="7" y="1" width="1" height="1" fill="#9a9a9a"/><rect x="8" y="1" width="1" height="1" fill="#9a9a9a"/><rect x="9" y="1" width="1" height="1" fill="#9a9a9a"/><rect x="10" y="1" width="1" height="1" fill="#9a9a9a"/><rect x="12" y="1" width="1" height="1" fill="#9a9a9a"/><rect x="15" y="1" width="1" height="1" fill="#9a9a9a"/><rect x="1" y="2" width="1" height="1" fill="#9a9a9a"/><rect x="2" y="2" width="1" height="1" fill="#9a9a9a"/><rect x="3" y="2" width="1" height="1" fill="#9a9a9a"/><rect x="5" y="2" width="1" height="1" fill="#9a9a9a"/><rect x="6" y="2" width="1" height="1" fill="#9a9a9a"/><rect x="8" y="2" width="1" height="1" fill="#9a9a9a"/><rect x="9" y="2" width="1" height="1" fill="#9a9a9a"/><rect x="12" y="2" width="1" height="1" fill="#9a9a9a"/><rect x="1" y="3" width="1" height="1" fill="#9a9a9a"/><rect x="3" y="3" width="1" height="1" fill="#9a9a9a"/><rect x="4" y="3" width="1" height="1" fill="#9a9a9a"/><rect x="6" y="3" width="1" height="1" fill="#9a9a9a"/><rect x="7" y="3" width="1" height="1" fill="#9a9a9a"/><rect x="8" y="3" width="1" height="1" fill="#9a9a9a"/><rect x="13" y="3" width="1" height="1" fill="#9a9a9a"/><rect x="1" y="4" width="1" height="1" fill="#9a9a9a"/><rect x="4" y="4" width="1" height="1" fill="#9a9a9a"/><rect x="5" y="4" width="1" height="1" fill="#9a9a9a"/><rect x="6" y="4" width="1" height="1" fill="#9a9a9a"/><rect x="7" y="4" width="1" height="1" fill="#9a9a9a"/><rect x="11" y="4" width="1" height="1" fill="#9a9a9a"/><rect x="12" y="4" width="1" height="1" fill="#9a9a9a"/><rect x="14" y="4" width="1" height="1" fill="#9a9a9a"/><rect x="15" y="4" width="1" height="1" fill="#9a9a9a"/><rect x="0" y="5" width="1" height="1" fill="#9a9a9a"/><rect x="1" y="5" width="1" height="1" fill="#9a9a9a"/><rect x="2" y="5" width="1" height="1" fill="#9a9a9a"/><rect x="4" y="5" width="1" height="1" fill="#9a9a9a"/><rect x="5" y="5" width="1" height="1" fill="#9a9a9a"/><rect x="6" y="5" width="1" height="1" fill="#9a9a9a"/><rect x="8" y="5" width="1" height="1" fill="#9a9a9a"/><rect x="9" y="5" width="1" height="1" fill="#9a9a9a"/><rect x="14" y="5" width="1" height="1" fill="#9a9a9a"/><rect x="15" y="5" width="1" height="1" fill="#9a9a9a"/><rect x="0" y="6" width="1" height="1" fill="#9a9a9a"/><rect x="3" y="6" width="1" height="1" fill="#9a9a9a"/><rect x="4" y="6" width="1" height="1" fill="#9a9a9a"/><rect x="5" y="6" width="1" height="1" fill="#9a9a9a"/><rect x="6" y="6" width="1" height="1" fill="#9a9a9a"/><rect x="7" y="6" width="1" height="1" fill="#9a9a9a"/><rect x="9" y="6" width="1" height="1" fill="#9a9a9a"/><rect x="10" y="6" width="1" height="1" fill="#9a9a9a"/><rect x="11" y="6" width="1" height="1" fill="#9a9a9a"/><rect x="12" y="6" width="1" height="1" fill="#9a9a9a"/><rect x="3" y="7" width="1" height="1" fill="#9a9a9a"/><rect x="8" y="7" width="1" height="1" fill="#9a9a9a"/><rect x="9" y="7" width="1" height="1" fill="#9a9a9a"/><rect x="10" y="7" width="1" height="1" fill="#9a9a9a"/><rect x="12" y="7" width="1" height="1" fill="#9a9a9a"/><rect x="13" y="7" width="1" height="1" fill="#9a9a9a"/><rect x="14" y="7" width="1" height="1" fill="#9a9a9a"/><rect x="15" y="7" width="1" height="1" fill="#9a9a9a"/><rect x="0" y="8" width="1" height="1" fill="#9a9a9a"/><rect x="1" y="8" width="1" height="1" fill="#9a9a9a"/><rect x="2" y="8" width="1" height="1" fill="#9a9a9a"/><rect x="3" y="8" width="1" height="1" fill="#9a9a9a"/><rect x="4" y="8" width="1" height="1" fill="#9a9a9a"/><rect x="5" y="8" width="1" height="1" fill="#9a9a9a"/><rect x="6" y="8" width="1" height="1" fill="#9a9a9a"/><rect x="9" y="8" width="1" height="1" fill="#9a9a9a"/><rect x="10" y="8" width="1" height="1" fill="#9a9a9a"/><rect x="11" y="8" width="1" height="1" fill="#9a9a9a"/><rect x="12" y="8" width="1" height="1" fill="#9a9a9a"/><rect x="13" y="8" width="1" height="1" fill="#9a9a9a"/><rect x="0" y="9" width="1" height="1" fill="#9a9a9a"/><rect x="1" y="9" width="1" height="1" fill="#9a9a9a"/><rect x="2" y="9" width="1" height="1" fill="#9a9a9a"/><rect x="3" y="9" width="1" height="1" fill="#9a9a9a"/><rect x="4" y="9" width="1" height="1" fill="#9a9a9a"/><rect x="5" y="9" width="1" height="1" fill="#9a9a9a"/><rect x="7" y="9" width="1" height="1" fill="#9a9a9a"/><rect x="8" y="9" width="1" height="1" fill="#9a9a9a"/><rect x="11" y="9" width="1" height="1" fill="#9a9a9a"/><rect x="13" y="9" width="1" height="1" fill="#9a9a9a"/><rect x="2" y="10" width="1" height="1" fill="#9a9a9a"/><rect x="3" y="10" width="1" height="1" fill="#9a9a9a"/><rect x="4" y="10" width="1" height="1" fill="#9a9a9a"/><rect x="6" y="10" width="1" height="1" fill="#9a9a9a"/><rect x="8" y="10" width="1" height="1" fill="#9a9a9a"/><rect x="9" y="10" width="1" height="1" fill="#9a9a9a"/><rect x="0" y="11" width="1" height="1" fill="#9a9a9a"/><rect x="2" y="11" width="1" height="1" fill="#9a9a9a"/><rect x="3" y="11" width="1" height="1" fill="#9a9a9a"/><rect x="4" y="11" width="1" height="1" fill="#9a9a9a"/><rect x="5" y="11" width="1" height="1" fill="#9a9a9a"/><rect x="6" y="11" width="1" height="1" fill="#9a9a9a"/><rect x="7" y="11" width="1" height="1" fill="#9a9a9a"/><rect x="9" y="11" width="1" height="1" fill="#9a9a9a"/><rect x="13" y="11" width="1" height="1" fill="#9a9a9a"/><rect x="14" y="11" width="1" height="1" fill="#9a9a9a"/><rect x="15" y="11" width="1" height="1" fill="#9a9a9a"/><rect x="0" y="12" width="1" height="1" fill="#9a9a9a"/><rect x="1" y="12" width="1" height="1" fill="#9a9a9a"/><rect x="5" y="12" width="1" height="1" fill="#9a9a9a"/><rect x="8" y="12" width="1" height="1" fill="#9a9a9a"/><rect x="13" y="12" width="1" height="1" fill="#9a9a9a"/><rect x="14" y="12" width="1" height="1" fill="#9a9a9a"/><rect x="0" y="13" width="1" height="1" fill="#9a9a9a"/><rect x="3" y="13" width="1" height="1" fill="#9a9a9a"/><rect x="4" y="13" width="1" height="1" fill="#9a9a9a"/><rect x="7" y="13" width="1" height="1" fill="#9a9a9a"/><rect x="8" y="13" width="1" height="1" fill="#9a9a9a"/><rect x="9" y="13" width="1" height="1" fill="#9a9a9a"/><rect x="12" y="13" width="1" height="1" fill="#9a9a9a"/><rect x="0" y="14" width="1" height="1" fill="#9a9a9a"/><rect x="2" y="14" width="1" height="1" fill="#9a9a9a"/><rect x="3" y="14" width="1" height="1" fill="#9a9a9a"/><rect x="8" y="14" width="1" height="1" fill="#9a9a9a"/><rect x="11" y="14" width="1" height="1" fill="#9a9a9a"/><rect x="12" y="14" width="1" height="1" fill="#9a9a9a"/><rect x="13" y="14" width="1" height="1" fill="#9a9a9a"/><rect x="14" y="14" width="1" height="1" fill="#9a9a9a"/><rect x="0" y="15" width="1" height="1" fill="#9a9a9a"/><rect x="1" y="15" width="1" height="1" fill="#9a9a9a"/><rect x="2" y="15" width="1" height="1" fill="#9a9a9a"/><rect x="4" y="15" width="1" height="1" fill="#9a9a9a"/><rect x="5" y="15" width="1" height="1" fill="#9a9a9a"/><rect x="8" y="15" width="1" height="1" fill="#9a9a9a"/><rect x="13" y="15" width="1" height="1" fill="#9a9a9a"/><rect x="14" y="15" width="1" height="1" fill="#9a9a9a"/><rect x="15" y="15" width="1" height="1" fill="#9a9a9a"/></svg>
<div class="a" style="left:306px;top:83px;width:1px;height:18px;background:#8e8e8e"></div>
<svg class="i" style="left:315px;top:85px" width="16" height="12" viewBox="0 0 16 12"><text x="0" y="11" font-family="Liberation Serif" font-weight="bold" font-size="14" fill="#0a0a8c" stroke="#0a0a8c" stroke-width="0.5">i</text><polygon points="6.5,4.8 10.3,4.8 10.3,2.2 14.8,6.3 10.3,10.4 10.3,7.8 6.5,7.8" fill="#dcd43c" stroke="#8a6810" stroke-width="0.8"/></svg>
<svg class="i" style="left:343px;top:85px" width="7" height="15" viewBox="0 0 7 15"><circle cx="3.3" cy="2.5" r="2" fill="#fff" stroke="#555" stroke-width="1"/><circle cx="3.3" cy="7.3" r="2" fill="#fff" stroke="#555" stroke-width="1"/><circle cx="3.3" cy="12.1" r="2" fill="#fff" stroke="#555" stroke-width="1"/></svg>
<svg class="i" style="left:364px;top:87px" width="10" height="4" viewBox="0 0 10 4"><rect x="0.5" y="0.5" width="9" height="3" fill="#fff" stroke="#5e5e5e" stroke-width="1"/></svg>
<svg class="i" style="left:387px;top:87px" width="10" height="10" viewBox="0 0 10 10"><rect x="0.5" y="0.5" width="9" height="9" fill="#fff" stroke="#5e5e5e" stroke-width="1"/><path d="M0.5 2.5h9" stroke="#5e5e5e"/></svg>
<div class="a" style="left:57px;top:159px;width:185px;height:18px;background:#d9d9d9"></div>
<svg class="i" style="left:-1px;top:112px" width="9" height="6" viewBox="0 0 9 6"><path d="M0.8 0.8 L4.2 4.4 L7.6 0.8" stroke="#333" stroke-width="1.3" fill="none"/></svg>
<svg class="i" style="left:14px;top:130px" width="9" height="6" viewBox="0 0 9 6"><path d="M0.8 0.8 L4.2 4.4 L7.6 0.8" stroke="#333" stroke-width="1.3" fill="none"/></svg>
<svg class="i" style="left:30px;top:148px" width="9" height="6" viewBox="0 0 9 6"><path d="M0.8 0.8 L4.2 4.4 L7.6 0.8" stroke="#333" stroke-width="1.3" fill="none"/></svg>
<svg class="i" style="left:11px;top:106px" width="16" height="16" viewBox="0 0 16 16"><rect x="0" y="0" width="16" height="16" fill="#1c2c8a"/><text x="1.2" y="10.2" font-family="Liberation Sans" font-weight="bold" font-size="11.5" fill="#fff" stroke="#fff" stroke-width="0.7" textLength="13.5" lengthAdjust="spacingAndGlyphs">PE</text><path d="M2 13.3h2M5 13.3h2.5M8.5 13.3h1.5M11 13.3h3" stroke="#e8ecf8" stroke-width="1.6"/></svg>
<div class="tree" style="left:32px;top:105px;letter-spacing:-0.31px">Togling_LED_Debug_FLASH_PNE [GDB PEMicro Interface Debugging]</div>
<svg class="i" style="left:28px;top:123px" width="16" height="17" viewBox="0 0 16 17"><path d="M2 5.5 Q3.5 1.8 8.5 2.2" stroke="#2a62b0" stroke-width="1.3" fill="none"/><polygon points="0.3,3.8 3.6,5 1.2,7.4" fill="#2a62b0"/><path d="M7.5 15.2 Q11 15.3 12.3 12.5" stroke="#2a62b0" stroke-width="1.3" fill="none"/><polygon points="10.8,12 14.2,10.9 13.6,14.3" fill="#2a62b0"/><rect x="0.5" y="9.5" width="3.5" height="6" fill="#f4dc88" stroke="#a88418" stroke-width="1"/><rect x="4.5" y="9.5" width="3.5" height="6" fill="#f4dc88" stroke="#a88418" stroke-width="1"/><rect x="9.6" y="2.1" width="2.0" height="2.2" fill="#f4c448" stroke="#7a5810" stroke-width="0.6" transform="rotate(0 10.6 6.5)"/><rect x="9.6" y="2.1" width="2.0" height="2.2" fill="#f4c448" stroke="#7a5810" stroke-width="0.6" transform="rotate(45 10.6 6.5)"/><rect x="9.6" y="2.1" width="2.0" height="2.2" fill="#f4c448" stroke="#7a5810" stroke-width="0.6" transform="rotate(90 10.6 6.5)"/><rect x="9.6" y="2.1" width="2.0" height="2.2" fill="#f4c448" stroke="#7a5810" stroke-width="0.6" transform="rotate(135 10.6 6.5)"/><rect x="9.6" y="2.1" width="2.0" height="2.2" fill="#f4c448" stroke="#7a5810" stroke-width="0.6" transform="rotate(180 10.6 6.5)"/><rect x="9.6" y="2.1" width="2.0" height="2.2" fill="#f4c448" stroke="#7a5810" stroke-width="0.6" transform="rotate(225 10.6 6.5)"/><rect x="9.6" y="2.1" width="2.0" height="2.2" fill="#f4c448" stroke="#7a5810" stroke-width="0.6" transform="rotate(270 10.6 6.5)"/><rect x="9.6" y="2.1" width="2.0" height="2.2" fill="#f4c448" stroke="#7a5810" stroke-width="0.6" transform="rotate(315 10.6 6.5)"/><circle cx="10.6" cy="6.5" r="3.0" fill="#f4c448" stroke="#7a5810" stroke-width="0.7"/><circle cx="10.6" cy="6.5" r="1.2" fill="#fff4d8" stroke="#7a5810" stroke-width="0.5"/></svg>
<div class="tree" style="left:49px;top:123px;letter-spacing:-0.34px">Togling_LED.elf</div>
<svg class="i" style="left:44px;top:141px" width="16" height="17" viewBox="0 0 16 17"><rect x="0.5" y="9.5" width="3.5" height="6" fill="#f4dc88" stroke="#a88418" stroke-width="1"/><rect x="4.5" y="9.5" width="3.5" height="6" fill="#f4dc88" stroke="#a88418" stroke-width="1"/><rect x="8.6" y="3.0000000000000004" width="2.0" height="2.2" fill="#f4c448" stroke="#7a5810" stroke-width="0.6" transform="rotate(0 9.6 7.4)"/><rect x="8.6" y="3.0000000000000004" width="2.0" height="2.2" fill="#f4c448" stroke="#7a5810" stroke-width="0.6" transform="rotate(45 9.6 7.4)"/><rect x="8.6" y="3.0000000000000004" width="2.0" height="2.2" fill="#f4c448" stroke="#7a5810" stroke-width="0.6" transform="rotate(90 9.6 7.4)"/><rect x="8.6" y="3.0000000000000004" width="2.0" height="2.2" fill="#f4c448" stroke="#7a5810" stroke-width="0.6" transform="rotate(135 9.6 7.4)"/><rect x="8.6" y="3.0000000000000004" width="2.0" height="2.2" fill="#f4c448" stroke="#7a5810" stroke-width="0.6" transform="rotate(180 9.6 7.4)"/><rect x="8.6" y="3.0000000000000004" width="2.0" height="2.2" fill="#f4c448" stroke="#7a5810" stroke-width="0.6" transform="rotate(225 9.6 7.4)"/><rect x="8.6" y="3.0000000000000004" width="2.0" height="2.2" fill="#f4c448" stroke="#7a5810" stroke-width="0.6" transform="rotate(270 9.6 7.4)"/><rect x="8.6" y="3.0000000000000004" width="2.0" height="2.2" fill="#f4c448" stroke="#7a5810" stroke-width="0.6" transform="rotate(315 9.6 7.4)"/><circle cx="9.6" cy="7.4" r="3.0" fill="#f4c448" stroke="#7a5810" stroke-width="0.7"/><circle cx="9.6" cy="7.4" r="1.2" fill="#fff4d8" stroke="#7a5810" stroke-width="0.5"/></svg>
<div class="tree" style="left:65px;top:141px;letter-spacing:-0.22px">Thread #1 (Suspended : Breakpoint)</div>
<svg class="i" style="left:61px;top:162px" width="13" height="12" viewBox="0 0 13 12"><rect x="0" y="1" width="12.5" height="2.2" fill="#2a62b0"/><rect x="0" y="5" width="12.5" height="2.2" fill="#2a62b0"/><rect x="0" y="9" width="12.5" height="2.2" fill="#2a62b0"/></svg>
<div class="tree" style="left:80px;top:159px;letter-spacing:-0.1px">main() at main.c:102 0x400dfc</div>
<svg class="i" style="left:28px;top:178px" width="14" height="16" viewBox="0 0 14 16"><rect x="5.5" y="0.5" width="7" height="14" rx="1.2" fill="#c4c8dc" stroke="#9c9c88"/><rect x="6" y="1" width="6" height="3.5" fill="#b4bad4"/><polygon points="6.5,1.5 9.2,3 6.5,4.5" fill="#2e9a48"/><path d="M6 5.5h6M6 8.5h6" stroke="#eef0f6"/><rect x="6" y="6" width="6" height="2" fill="#b8bcd4"/><rect x="6" y="9" width="6" height="5" fill="#b4b8ce"/><polygon points="0,8 7.2,11.6 0,15.2" fill="#3aa04a" stroke="#1e7a38" stroke-width="0.6"/><polygon points="1,10 4,11.6 1,13" fill="#6cc070"/></svg>
<svg class="i" style="left:28px;top:196px" width="14" height="16" viewBox="0 0 14 16"><rect x="5.5" y="0.5" width="7" height="14" rx="1.2" fill="#c4c8dc" stroke="#9c9c88"/><rect x="6" y="1" width="6" height="3.5" fill="#b4bad4"/><polygon points="6.5,1.5 9.2,3 6.5,4.5" fill="#2e9a48"/><path d="M6 5.5h6M6 8.5h6" stroke="#eef0f6"/><rect x="6" y="6" width="6" height="2" fill="#b8bcd4"/><rect x="6" y="9" width="6" height="5" fill="#b4b8ce"/><polygon points="0,8 7.2,11.6 0,15.2" fill="#3aa04a" stroke="#1e7a38" stroke-width="0.6"/><polygon points="1,10 4,11.6 1,13" fill="#6cc070"/></svg>
<svg class="i" style="left:28px;top:214px" width="14" height="16" viewBox="0 0 14 16"><rect x="5.5" y="0.5" width="7" height="14" rx="1.2" fill="#c4c8dc" stroke="#9c9c88"/><rect x="6" y="1" width="6" height="3.5" fill="#b4bad4"/><polygon points="6.5,1.5 9.2,3 6.5,4.5" fill="#2e9a48"/><path d="M6 5.5h6M6 8.5h6" stroke="#eef0f6"/><rect x="6" y="6" width="6" height="2" fill="#b8bcd4"/><rect x="6" y="9" width="6" height="5" fill="#b4b8ce"/><polygon points="0,8 7.2,11.6 0,15.2" fill="#3aa04a" stroke="#1e7a38" stroke-width="0.6"/><polygon points="1,10 4,11.6 1,13" fill="#6cc070"/></svg>
<div class="tree" style="left:48px;top:177px;width:359px;overflow:hidden;letter-spacing:-0.06px">C:\NXP\S32DS.3.5_bga_board\eclipse\plugins\com.pemicro.debug.gdbjtag.pne_4.7.2.201904251</div>
<div class="tree" style="left:48px;top:195px;letter-spacing:0.27px">arm-none-eabi-gdb</div>
<div class="tree" style="left:48px;top:213px;letter-spacing:0.03px">Semihosting Console</div>
<div class="a" style="left:412px;top:79px;width:811px;height:478px;background:#fff;border-top:1px solid #dadada;border-left:1px solid #dadada;border-right:1px solid #dadada"></div>
<div class="a" style="left:413px;top:80px;width:809px;height:25px;background:#e7e7e7"></div>
<div class="a" style="left:413px;top:80px;width:85px;height:25px;background:#f0f0f0"></div>
<div class="a" style="left:498px;top:80px;width:1px;height:25px;background:#d8d8d8"></div>
<div class="a" style="left:498px;top:104px;width:724px;height:1px;background:#d8d8d8"></div>
<svg class="i" style="left:420px;top:86px" width="12" height="14" viewBox="0 0 12 14"><path d="M0.5 0.5h7l3.5 3.5v9.5h-10.5z" fill="#f4f8fe" stroke="#a88c48"/><path d="M7.5 0.5v3.5h3.5z" fill="#f0d890" stroke="#c0a050" stroke-width="0.6"/><text x="1" y="11.5" font-family="Liberation Sans" font-weight="bold" font-size="9" fill="#2a5aa0">.c</text></svg>
<div class="t" style="left:437px;top:86px">main.c</div>
<svg class="i" style="left:480px;top:87px" width="11" height="11" viewBox="0 0 11 11"><path d="M1.8 1.8 L8.7 8.7 M8.7 1.8 L1.8 8.7" stroke="#505050" stroke-width="3.2" stroke-linecap="square"/><path d="M1.8 1.8 L8.7 8.7 M8.7 1.8 L1.8 8.7" stroke="#fff" stroke-width="1.3" stroke-linecap="square"/></svg>
<svg class="i" style="left:503px;top:86px" width="16" height="14" viewBox="0 0 16 14"><rect x="0.5" y="0.5" width="14.5" height="13" fill="#e8f4fc" stroke="#a88c48"/><rect x="1" y="1" width="13.5" height="2" fill="#4a8ad0"/><text x="4.5" y="11.5" font-family="Liberation Sans" font-weight="bold" font-size="9" fill="#2a5aa0">c</text></svg>
<div class="t" style="left:522px;top:86px;letter-spacing:-0.1px">main() at main.c:102 0x400dfc</div>
<svg class="i" style="left:1179px;top:87px" width="10" height="4" viewBox="0 0 10 4"><rect x="0.5" y="0.5" width="9" height="3" fill="#fff" stroke="#5e5e5e" stroke-width="1"/></svg>
<svg class="i" style="left:1202px;top:87px" width="10" height="10" viewBox="0 0 10 10"><rect x="0.5" y="0.5" width="9" height="9" fill="#fff" stroke="#5e5e5e" stroke-width="1"/><path d="M0.5 2.5h9" stroke="#5e5e5e"/></svg>
<div class="a" style="left:413px;top:105px;width:12px;height:452px;background:#f7f7f7"></div>
<div class="a" style="left:442px;top:105px;width:1px;height:452px;background:#f3f3f3"></div>
<div class="a" style="left:413px;top:510px;width:12px;height:47px;background:repeating-conic-gradient(#0a74dc 0 25%, #ffffff 0 50%) 0 0/2px 2px;border-top:1px solid #0a74dc"></div>
<svg class="i" style="left:433px;top:108.0px" width="10" height="10" viewBox="0 0 10 10"><circle cx="4.5" cy="4.5" r="4" fill="#e8eef6" stroke="#a8b4c4" stroke-width="1"/><path d="M2.2 4.5h4.6" stroke="#3a4a5a" stroke-width="1.2"/></svg>
<svg class="i" style="left:433px;top:183.0px" width="10" height="10" viewBox="0 0 10 10"><circle cx="4.5" cy="4.5" r="4" fill="#e8eef6" stroke="#a8b4c4" stroke-width="1"/><path d="M2.2 4.5h4.6" stroke="#3a4a5a" stroke-width="1.2"/></svg>
<svg class="i" style="left:433px;top:288.0px" width="10" height="10" viewBox="0 0 10 10"><circle cx="4.5" cy="4.5" r="4" fill="#e8eef6" stroke="#a8b4c4" stroke-width="1"/><path d="M2.2 4.5h4.6" stroke="#3a4a5a" stroke-width="1.2"/></svg>
<svg class="i" style="left:433px;top:438.0px" width="10" height="10" viewBox="0 0 10 10"><circle cx="4.5" cy="4.5" r="4" fill="#e8eef6" stroke="#a8b4c4" stroke-width="1"/><path d="M2.2 4.5h4.6" stroke="#3a4a5a" stroke-width="1.2"/></svg>
<svg class="i" style="left:433px;top:513.0px" width="10" height="10" viewBox="0 0 10 10"><circle cx="4.5" cy="4.5" r="4" fill="#e8eef6" stroke="#a8b4c4" stroke-width="1"/><path d="M2.2 4.5h4.6" stroke="#3a4a5a" stroke-width="1.2"/></svg>
<div class="a" style="left:1193px;top:105px;width:16px;height:452px;background:#efefef"></div>
<div class="a" style="left:1209px;top:105px;width:13px;height:452px;background:#f7f7f7"></div>
<svg class="i" style="left:1197px;top:111px" width="9" height="6" viewBox="0 0 9 6"><path d="M1 5 L4.5 1.5 L8 5" stroke="#555" stroke-width="1.5" fill="none"/></svg>
<div id="code"><span class="c">/*==================================================================================================</span>
<span class="c">*                                       LOCAL FUNCTIONS</span>
<span class="c">==================================================================================================*/</span>


<span class="c">/*==================================================================================================</span>
<span class="c">*                                       GLOBAL FUNCTIONS</span>
<span class="c">==================================================================================================*/</span>



<span class="k">void</span> <span class="fn">TestDelay</span>(<span class="ty">uint32</span> delay);
<span class="k">void</span> <span class="fn">TestDelay</span>(<span class="ty">uint32</span> delay)
{
    <span class="k">static</span> <span class="k">volatile</span> <span class="ty">uint32</span> DelayTimer = 0;
    <span class="k">while</span> (DelayTimer&lt;delay)
    {
        DelayTimer++;
    }
    DelayTimer=0;
}

<span class="c">/**</span>
<span class="c">* @brief        Main function of the example</span>
<span class="c">* @details      Initializez the used drivers and uses the Icu</span>
<span class="c">*               and Dio drivers to toggle a LED on a push button</span>
<span class="c">*/</span>
<span class="k">int</span> <span class="fn">main</span>(<span class="k">void</span>)
{
    <span class="ty">uint8</span> count = 0U;
</div>
<svg class="i" style="left:557px;top:478.5px" width="77" height="3" viewBox="0 0 77 3"><polyline points="0,0 1,1 2,2 3,1 4,0 5,1 6,2 7,1 8,0 9,1 10,2 11,1 12,0 13,1 14,2 15,1 16,0 17,1 18,2 19,1 20,0 21,1 22,2 23,1 24,0 25,1 26,2 27,1 28,0 29,1 30,2 31,1 32,0 33,1 34,2 35,1 36,0 37,1 38,2 39,1 40,0 41,1 42,2 43,1 44,0 45,1 46,2 47,1 48,0 49,1 50,2 51,1 52,0 53,1 54,2 55,1 56,0 57,1 58,2 59,1 60,0 61,1 62,2 63,1 64,0 65,1 66,2 67,1 68,0 69,1 70,2 71,1 72,0 73,1 74,2 75,1 76,0 77,1" fill="none" stroke="#ff3a1a" stroke-width="0.8"/></svg>
<svg class="i" style="left:851px;top:478.5px" width="21" height="3" viewBox="0 0 21 3"><polyline points="0,0 1,1 2,2 3,1 4,0 5,1 6,2 7,1 8,0 9,1 10,2 11,1 12,0 13,1 14,2 15,1 16,0 17,1 18,2 19,1 20,0 21,1" fill="none" stroke="#ff3a1a" stroke-width="0.8"/></svg>
<svg class="i" style="left:585px;top:493.5px" width="21" height="3" viewBox="0 0 21 3"><polyline points="0,0 1,1 2,2 3,1 4,0 5,1 6,2 7,1 8,0 9,1 10,2 11,1 12,0 13,1 14,2 15,1 16,0 17,1 18,2 19,1 20,0 21,1" fill="none" stroke="#ff3a1a" stroke-width="0.8"/></svg>
<div class="a" style="left:1227px;top:79px;width:134px;height:478px;background:#fff;border-top:1px solid #dadada;border-left:1px solid #dadada"></div>
<div class="a" style="left:1228px;top:80px;width:133px;height:25px;background:#e7e7e7"></div>
<div class="a" style="left:1228px;top:80px;width:59px;height:25px;background:#f0f0f0"></div>
<div class="a" style="left:1287px;top:80px;width:1px;height:25px;background:#d8d8d8"></div>
<div class="a" style="left:1287px;top:104px;width:74px;height:1px;background:#d8d8d8"></div>
<div class="a" style="left:1228px;top:105px;width:133px;height:22px;background:#f0f0f0"></div>
<div class="t" style="left:1231px;top:85px;font-size:10.5px;color:#3a86d0;letter-spacing:-0.3px">(x)=</div>
<div class="t" style="left:1251px;top:86px">V</div>
<svg class="i" style="left:1269px;top:87px" width="11" height="11" viewBox="0 0 11 11"><path d="M1.8 1.8 L8.7 8.7 M8.7 1.8 L1.8 8.7" stroke="#505050" stroke-width="3.2" stroke-linecap="square"/><path d="M1.8 1.8 L8.7 8.7 M8.7 1.8 L1.8 8.7" stroke="#fff" stroke-width="1.3" stroke-linecap="square"/></svg>
<svg class="i" style="left:1292px;top:87px" width="15" height="13" viewBox="0 0 15 13"><circle cx="3.6" cy="3.5" r="2.9" fill="#5a9edc" stroke="#2a6ab0" stroke-width="0.8"/><circle cx="10.5" cy="8.5" r="3.1" fill="#5a9edc" stroke="#2a6ab0" stroke-width="0.8"/><circle cx="3.2" cy="2.8" r="1.1" fill="#a8d0f4"/><circle cx="10" cy="7.8" r="1.2" fill="#a8d0f4"/></svg>
<div class="t" style="left:1310px;top:86px">B</div>
<svg class="i" style="left:1329px;top:86px" width="17" height="14" viewBox="0 0 17 14"><circle cx="4" cy="7.3" r="2.6" fill="#dcecf8" stroke="#2a7ac8" stroke-width="1.3"/><circle cx="10.6" cy="7.3" r="2.6" fill="#dcecf8" stroke="#2a7ac8" stroke-width="1.3"/><path d="M6.6 7h1.4M13 6.3 Q13.5 1.5 16.3 1M1.4 6.5 Q1.2 2.5 4 1.5" stroke="#2a7ac8" stroke-width="1.2" fill="none"/><path d="M5.8 11.2l2 2M7.8 11.2l-2 2M9.5 11.5h2.6M9.5 13h2.6" stroke="#2a7ac8" stroke-width="0.9"/></svg>
<div class="t" style="left:1349px;top:86px">E</div>
<div class="t" style="left:1234px;top:132px">Name</div>
<div class="t" style="left:1248px;top:155px;font-size:9.5px;font-weight:bold;color:#34466a;letter-spacing:-0.1px">(x)=</div>
<div class="t" style="left:1269px;top:153px">count</div>
<div class="a" style="left:1228px;top:168px;width:133px;height:1px;background:#e4e4e4"></div>
<div class="a" style="left:1228px;top:186px;width:133px;height:1px;background:#e4e4e4"></div>
<div class="a" style="left:1228px;top:204px;width:133px;height:1px;background:#e4e4e4"></div>
<div class="a" style="left:1228px;top:222px;width:133px;height:1px;background:#e4e4e4"></div>
<div class="a" style="left:1228px;top:240px;width:133px;height:1px;background:#e4e4e4"></div>
<div class="a" style="left:1228px;top:258px;width:133px;height:1px;background:#e4e4e4"></div>
<div class="a" style="left:1228px;top:276px;width:133px;height:1px;background:#e4e4e4"></div>
<div class="a" style="left:1228px;top:294px;width:133px;height:1px;background:#e4e4e4"></div>
<div class="a" style="left:1228px;top:312px;width:133px;height:1px;background:#e4e4e4"></div>
<div class="a" style="left:1228px;top:330px;width:133px;height:1px;background:#e4e4e4"></div>
<div class="a" style="left:1228px;top:348px;width:133px;height:1px;background:#e4e4e4"></div>
<div class="a" style="left:1228px;top:366px;width:133px;height:1px;background:#e4e4e4"></div>
<div class="a" style="left:1228px;top:384px;width:133px;height:1px;background:#e4e4e4"></div>
<div class="a" style="left:1228px;top:402px;width:133px;height:1px;background:#e4e4e4"></div>
<div class="a" style="left:1228px;top:420px;width:133px;height:1px;background:#e4e4e4"></div>
<div class="a" style="left:1228px;top:438px;width:133px;height:1px;background:#e4e4e4"></div>
<div class="a" style="left:1228px;top:456px;width:133px;height:1px;background:#e4e4e4"></div>
<div class="a" style="left:1228px;top:474px;width:133px;height:1px;background:#e4e4e4"></div>
<div class="a" style="left:1228px;top:492px;width:133px;height:1px;background:#e4e4e4"></div>
<div class="a" style="left:1228px;top:499px;width:133px;height:5px;background:#efefef"></div>
</body></html>
